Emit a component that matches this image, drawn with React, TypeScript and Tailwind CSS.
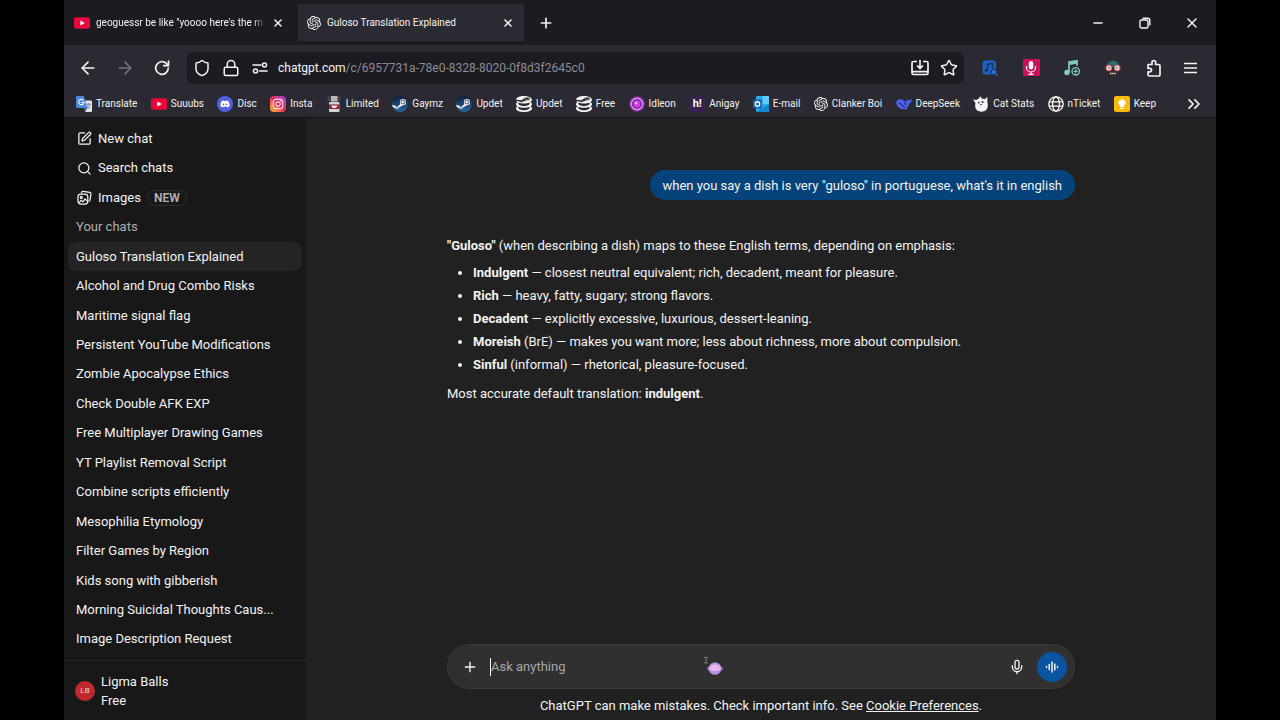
import type { ReactNode } from "react";
import { ArrowLeft, ArrowRight, ChevronsRight, Lock, Mic, Minus, Plus, Search, Shield, SquarePen, Star, X } from "lucide-react";
import { FaDiscord, FaInstagram } from "react-icons/fa";
import { SiOpenai, SiSteamdb } from "react-icons/si";

const chats = [
  "Guloso Translation Explained",
  "Alcohol and Drug Combo Risks",
  "Maritime signal flag",
  "Persistent YouTube Modifications",
  "Zombie Apocalypse Ethics",
  "Check Double AFK EXP",
  "Free Multiplayer Drawing Games",
  "YT Playlist Removal Script",
  "Combine scripts efficiently",
  "Mesophilia Etymology",
  "Filter Games by Region",
  "Kids song with gibberish",
  "Morning Suicidal Thoughts Caus...",
  "Image Description Request",
];

const terms = [
  { term: "Indulgent", note: " — closest neutral equivalent; rich, decadent, meant for pleasure." },
  { term: "Rich", note: " — heavy, fatty, sugary; strong flavors." },
  { term: "Decadent", note: " — explicitly excessive, luxurious, dessert-leaning." },
  { term: "Moreish", note: " (BrE) — makes you want more; less about richness, more about compulsion." },
  { term: "Sinful", note: " (informal) — rhetorical, pleasure-focused." },
];

function YouTubeIcon() {
  return (
    <svg viewBox="0 0 16 16" className="size-4 shrink-0">
      <rect x="0" y="2.2" width="16" height="11.6" rx="2" fill="#e8063a" />
      <path d="M6.3 5.4v5.2L10.8 8z" fill="#fff" />
    </svg>
  );
}

function TranslateIcon() {
  return (
    <svg viewBox="0 0 16 16" className="size-4 shrink-0">
      <path d="M6.5 4.5H15a1 1 0 0 1 1 1V15a1 1 0 0 1-1 1H9.5z" fill="#dfe3e8" />
      <path d="M10 8.3h4.8M12.4 7v1.3M14 8.5c-.4 1.8-1.6 3-3 3.9M11 9.8c.7 1.3 1.7 2.2 3 2.8" stroke="#6d7f93" strokeWidth=".9" fill="none" />
      <path d="M1 0h6.8l3.4 12H1a1 1 0 0 1-1-1V1a1 1 0 0 1 1-1z" fill="#4c86e0" />
      <path d="M7.3 4.2A2.7 2.7 0 1 0 8 6.2H5.4" stroke="#fff" strokeWidth="1.1" fill="none" />
      <path d="M8.6 12h2.6l-1.7 3.2z" fill="#2f5fb8" />
    </svg>
  );
}

function DiscordIcon() {
  return (
    <span className="flex size-4 shrink-0 items-center justify-center rounded-full bg-[#5260e0]">
      <FaDiscord className="size-[10px] text-white" />
    </span>
  );
}

function InstaIcon() {
  return (
    <span className="flex size-4 shrink-0 items-center justify-center rounded bg-linear-to-tr from-[#ffb300] via-[#f0245e] to-[#9a2bd8]">
      <FaInstagram className="size-3 text-white" />
    </span>
  );
}

function LimitedIcon() {
  return (
    <svg viewBox="0 0 16 16" className="size-4 shrink-0">
      <path d="M1.5 1.5h3.5M11 1.5h3.5M1.5 4h13" stroke="#55545c" strokeWidth="1.4" />
      <rect x="5" y="0" width="6.5" height="5.5" fill="#b9b5b8" />
      <rect x="3" y="6" width="10.5" height="10" rx="1" fill="#d9d2d2" />
      <rect x="3" y="8.4" width="10.5" height="4.6" fill="#8c2637" />
      <path d="M5 9.5h6.5L10 12H6.5z" fill="#f0e3e3" />
    </svg>
  );
}

function SteamIcon() {
  return (
    <svg viewBox="0 0 16 16" className="size-4 shrink-0">
      <defs>
        <linearGradient id="steam" x1="0" y1="0" x2="0" y2="1">
          <stop offset="0" stopColor="#13203c" />
          <stop offset="1" stopColor="#1f6a9c" />
        </linearGradient>
      </defs>
      <circle cx="8" cy="8" r="8" fill="url(#steam)" />
      <path d="M.2 8.800 5.200 10.600 8.300 8.200l.6-2.700 4-.3.500 3.100-3.300 1.500-2.700 1.400A2.400 2.400 0 0 1 3.200 12.300L.6 10.700z" fill="#f4f6f8" />
      <circle cx="10.900" cy="6" r="3.100" fill="#f4f6f8" />
      <circle cx="10.900" cy="6" r="1.900" fill="#f4f6f8" stroke="#1c3253" strokeWidth=".8" />
      <circle cx="5.300" cy="11.400" r="1.300" fill="none" stroke="#1c3253" strokeWidth=".6" />
    </svg>
  );
}

function IdleonIcon() {
  return (
    <svg viewBox="0 0 16 16" className="size-4 shrink-0">
      <circle cx="8" cy="8" r="7.8" fill="#7c2fa0" />
      <circle cx="8" cy="8" r="5.8" fill="none" stroke="#e68cf0" strokeWidth="1.4" />
      <circle cx="8" cy="8" r="3.4" fill="#d23ce0" />
      <circle cx="7" cy="7" r="1.3" fill="#f6b4fb" />
    </svg>
  );
}

function AnigayIcon() {
  return (
    <span className="flex size-4 shrink-0 items-center justify-center rounded-sm bg-[#35224f] text-[11px] leading-4 font-bold text-white">
      h!
    </span>
  );
}

function OutlookIcon() {
  return (
    <svg viewBox="0 0 16 16" className="size-4 shrink-0">
      <rect x="3" y="0" width="13" height="16" rx="1" fill="#2aa7e8" />
      <path d="M9.500 0H15a1 1 0 0 1 1 1v7H9.500z" fill="#5ccbf5" />
      <path d="M3 16 16 8.500V15a1 1 0 0 1-1 1z" fill="#1783d1" />
      <rect x="0" y="3.500" width="9" height="9" rx="1" fill="#0f66b8" />
      <circle cx="4.500" cy="8" r="2.200" fill="none" stroke="#fff" strokeWidth="1.400" />
    </svg>
  );
}

function DeepSeekIcon() {
  return (
    <svg viewBox="0 0 16 16" className="size-4 shrink-0">
      <path
        d="M.3 6.2C.5 4 2.4 3.200 4.600 3.300c1.500.1 2.900.9 4 2l1.700 1.300c.3-1-.1-2.200.4-3.300.5.900 1.300 1 2.300.9.900-.1 1.700-.5 2.600-1.300.3 2.500-.8 3.900-2.300 4.500-.5 2.200-1.700 3.800-2.900 4.700l1.300 1.200c-1 .5-2.200.3-3.200-.2C4.500 13.800.3 10.600.3 6.200z"
        fill="#4b63f5"
      />
      <path d="M3 7.300c2.300 0 3.400 3.300 6 4.300M8 7.200c1 0 1.800.9 1.800 2" stroke="#2b2a33" strokeWidth="1.100" fill="none" />
    </svg>
  );
}

function CatIcon() {
  return (
    <svg viewBox="0 0 16 16" className="size-4 shrink-0">
      <path d="M0 3.500 3.300 4 5.800 2.600 7.200.3l1.700 2.200 2.600.8L14.500 1l-.2 4.500c1 3.400.6 6.500-1.200 8.500-1.700 1.900-6.300 2.200-8.800.6C2.200 13.200 1.800 9.900 2.500 7z" fill="#f4f4f4" />
      <circle cx="5.800" cy="6.600" r=".9" fill="#222" />
      <circle cx="9.600" cy="6" r=".9" fill="#222" />
      <path d="m7.200 9 1.800-.7" stroke="#222" strokeWidth=".9" />
    </svg>
  );
}

function GlobeIcon() {
  return (
    <svg viewBox="0 0 16 16" className="size-4 shrink-0" fill="none" stroke="#fbfbfe" strokeWidth="1.300">
      <circle cx="8" cy="8" r="7.200" />
      <ellipse cx="8" cy="8" rx="3.400" ry="7.200" />
      <path d="M1.200 5.800h13.600M1.200 10.200h13.600" />
    </svg>
  );
}

function KeepIcon() {
  return (
    <svg viewBox="0 0 16 16" className="size-4 shrink-0">
      <rect width="16" height="16" rx="2" fill="#f9bb0b" />
      <path d="M8 3.200a3.700 3.700 0 0 0-2 6.800v1h4v-1a3.700 3.700 0 0 0-2-6.800zM6.200 11.700h3.600v1.300H6.200z" fill="#fff" />
    </svg>
  );
}

const bookmarks: { label: string; icon: ReactNode }[] = [
  { label: "Translate", icon: <TranslateIcon /> },
  { label: "Suuubs", icon: <YouTubeIcon /> },
  { label: "Disc", icon: <DiscordIcon /> },
  { label: "Insta", icon: <InstaIcon /> },
  { label: "Limited", icon: <LimitedIcon /> },
  { label: "Gaymz", icon: <SteamIcon /> },
  { label: "Updet", icon: <SteamIcon /> },
  { label: "Updet", icon: <SiSteamdb className="size-4 shrink-0" /> },
  { label: "Free", icon: <SiSteamdb className="size-4 shrink-0" /> },
  { label: "Idleon", icon: <IdleonIcon /> },
  { label: "Anigay", icon: <AnigayIcon /> },
  { label: "E-mail", icon: <OutlookIcon /> },
  { label: "Clanker Boi", icon: <SiOpenai className="size-[14px] shrink-0" /> },
  { label: "DeepSeek", icon: <DeepSeekIcon /> },
  { label: "Cat Stats", icon: <CatIcon /> },
  { label: "nTicket", icon: <GlobeIcon /> },
  { label: "Keep", icon: <KeepIcon /> },
];

function IconButton({ label, children }: { label: string; children: ReactNode }) {
  return (
    <button type="button" aria-label={label} className="flex size-5 shrink-0 items-center justify-center">
      {children}
    </button>
  );
}

function TabStrip() {
  return (
    <div className="flex h-[45px] shrink-0 items-center bg-[#1c1b22] text-[10px] leading-4">
      <div className="flex h-[37px] w-[234px] items-center gap-[6px] pr-[14px] pl-[10px]">
        <YouTubeIcon />
        <span className="flex-1 whitespace-nowrap mask-r-from-92%">geoguessr be like "yoooo here's the m</span>
        <button type="button" aria-label="Close tab">
          <X className="size-3" strokeWidth={3} />
        </button>
      </div>
      <div className="flex h-[37px] w-[226px] items-center gap-[6px] bg-[#2b2a33] pr-[10px] pl-[9px]">
        <SiOpenai className="size-[14px] shrink-0" />
        <span className="flex-1 truncate">Guloso Translation Explained</span>
        <button type="button" aria-label="Close tab">
          <X className="size-3" strokeWidth={3} />
        </button>
      </div>
      <button type="button" aria-label="New tab" className="ml-[14px]">
        <Plus className="size-4" strokeWidth={2.5} />
      </button>
      <div className="ml-auto flex gap-[27px] pr-[14px]">
        <IconButton label="Minimize">
          <Minus className="size-[14px]" strokeWidth={2.5} />
        </IconButton>
        <IconButton label="Restore">
          <svg viewBox="0 0 12 12" className="size-3" fill="none" stroke="currentColor" strokeWidth="1.400">
            <rect x="1" y="3" width="8" height="8" rx="1.500" />
            <path d="M3.500 1.200h5.300a2 2 0 0 1 2 2v5.300" />
          </svg>
        </IconButton>
        <IconButton label="Close">
          <X className="size-4" strokeWidth={2} />
        </IconButton>
      </div>
    </div>
  );
}

function NavBar() {
  return (
    <div className="flex h-[45px] shrink-0 items-center pr-[15px] pl-[14px]">
      <div className="flex gap-[17px]">
        <IconButton label="Back">
          <ArrowLeft className="size-5" />
        </IconButton>
        <IconButton label="Forward">
          <ArrowRight className="size-5 text-[#72717a]" />
        </IconButton>
        <IconButton label="Reload">
          <svg viewBox="0 0 16 16" className="size-4" fill="none" stroke="currentColor" strokeWidth="1.700" strokeLinecap="round">
            <path d="M14.300 8A6.300 6.300 0 1 1 12.300 3.400L14 5.200" />
            <path d="M14.500 1v4.700H9.800" />
          </svg>
        </IconButton>
      </div>
      <div className="ml-[15px] flex h-8 flex-1 items-center rounded-md bg-[#1c1b22] px-[5px]">
        <div className="flex gap-[9px]">
          <IconButton label="Tracking protection">
            <Shield className="size-[18px]" />
          </IconButton>
          <IconButton label="Connection secure">
            <Lock className="size-[18px]" />
          </IconButton>
          <IconButton label="Permissions">
            <svg viewBox="0 0 16 12" className="h-3 w-4" fill="none" stroke="currentColor" strokeWidth="1.500" strokeLinecap="round">
              <path d="M1 3h8M7.500 9H15" />
              <circle cx="12.500" cy="3" r="2" />
              <circle cx="3.500" cy="9" r="2" />
            </svg>
          </IconButton>
        </div>
        <label className="ml-2 flex flex-1 text-[12px] leading-5">
          <span>chatgpt.com</span>
          <input
            aria-label="Address"
            defaultValue="/c/6957731a-78e0-8328-8020-0f8d3f2645c0"
            className="min-w-0 flex-1 bg-transparent text-[#8d8c94] outline-none"
          />
        </label>
        <div className="flex gap-[9px]">
          <IconButton label="Install page">
            <svg viewBox="0 0 18 16" className="h-4 w-[18px]" fill="none" stroke="currentColor" strokeWidth="1.700">
              <path d="M6 1.500H2.500a1.500 1.500 0 0 0-1.500 1.500v10a1.500 1.500 0 0 0 1.500 1.500h13a1.500 1.500 0 0 0 1.500-1.500V3a1.500 1.500 0 0 0-1.500-1.500H12M1.500 11.700h15M9 0v8M6 5.500 9 8.500l3-3" />
            </svg>
          </IconButton>
          <IconButton label="Bookmark this page">
            <Star className="size-[18px]" />
          </IconButton>
        </div>
      </div>
      <div className="ml-4 flex gap-[21px]">
        <IconButton label="Music search">
          <svg viewBox="0 0 16 16" className="size-4">
            <rect x=".5" y=".5" width="13.500" height="14" rx="3" fill="#2062c4" />
            <path d="M5.600 10V4.300l5-1.100V8" stroke="#1b2f55" strokeWidth="1.400" fill="none" />
            <circle cx="4.400" cy="10.300" r="1.600" fill="#1b2f55" />
            <circle cx="12" cy="12" r="2.900" fill="#2a6ed0" stroke="#222c48" />
            <path d="m14 14 1.700 1.700" stroke="#2a6ed0" strokeWidth="1.500" />
          </svg>
        </IconButton>
        <IconButton label="Voice recorder">
          <span className="flex h-[17px] w-[17px] items-center justify-center bg-[#cf0f5c]">
            <svg viewBox="0 0 12 14" className="h-[14px] w-3">
              <rect x="3.800" y="0" width="4.400" height="8.500" rx="2.200" fill="#fff" />
              <path d="M1.500 5v1.500a4.500 4.500 0 0 0 9 0V5M6 11v2.500M3.500 13.300h5" stroke="#fff" strokeWidth="1.200" fill="none" />
            </svg>
          </span>
        </IconButton>
        <IconButton label="Music downloader">
          <svg viewBox="0 0 16 16" className="size-4" fill="none" stroke="#7fcdb8" strokeWidth="1.700">
            <path d="M5 12.500V2l8-1.200v5" />
            <path d="M5 3.800 13 2.600" strokeWidth="2.400" />
            <circle cx="2.900" cy="12.500" r="2.700" fill="#7fcdb8" stroke="none" />
            <circle cx="11.700" cy="11.300" r="3.700" strokeWidth="1.300" />
            <path d="M11.700 9.300v4M9.700 11.300h4" strokeWidth="1.300" />
          </svg>
        </IconButton>
        <IconButton label="Masked profile">
          <svg viewBox="0 0 16 16" className="size-4">
            <path d="M1.500 7a6.500 6.500 0 0 1 13 0z" fill="#2b6b6b" />
            <path d="M3.500 10h9l-1.500 5.500H5z" fill="#3a2a2c" />
            <circle cx="3.800" cy="8" r="2.700" fill="#fff" stroke="#e0686a" strokeWidth="1.200" />
            <circle cx="12.200" cy="8" r="2.700" fill="#fff" stroke="#e0686a" strokeWidth="1.200" />
            <circle cx="4" cy="8" r=".8" fill="#222" />
            <circle cx="12" cy="8" r=".8" fill="#222" />
            <path d="M5 13.500h6" stroke="#e8dcd2" strokeWidth="1.300" strokeDasharray="1.500 .7" />
          </svg>
        </IconButton>
        <IconButton label="Extensions">
          <svg viewBox="0 0 16 18" className="h-[18px] w-4" fill="none" stroke="currentColor" strokeWidth="1.700" strokeLinejoin="round">
            <path d="M2 5.500h4V3.300a1.800 1.800 0 0 1 3.600 0v2.200h2.900a1.500 1.500 0 0 1 1.500 1.500v8.500a1.500 1.500 0 0 1-1.500 1.500H3.500A1.500 1.500 0 0 1 2 15.500v-2.700h1.800a1.700 1.700 0 0 0 0-3.400H2z" />
          </svg>
        </IconButton>
        <button type="button" aria-label="Open menu" className="-ml-1 flex size-5 items-center justify-center">
          <svg viewBox="0 0 14 12" className="h-3 w-[14px]" stroke="currentColor" strokeWidth="1.500">
            <path d="M0 1.500h13M0 6h13M0 10.500h13" />
          </svg>
        </button>
      </div>
    </div>
  );
}

function BookmarksBar() {
  return (
    <nav aria-label="Bookmarks" className="flex h-[27px] shrink-0 items-center px-3 text-[10px] leading-4">
      <ul className="flex flex-1 justify-between">
        {bookmarks.map((b, i) => (
          <li key={i}>
            <a href="#" className="flex items-center gap-1 whitespace-nowrap">
              {b.icon}
              {b.label}
            </a>
          </li>
        ))}
      </ul>
      <button type="button" aria-label="More bookmarks" className="ml-7">
        <ChevronsRight className="size-5" />
      </button>
    </nav>
  );
}

function Sidebar() {
  return (
    <aside className="flex w-[242px] shrink-0 flex-col bg-[#181818]">
      <nav className="flex min-h-0 flex-1 flex-col px-1 py-[6px] *:flex-1">
        <a href="#" className="flex items-center gap-[6px] px-[9px]">
          <SquarePen className="size-[15px]" /> New chat
        </a>
        <a href="#" className="flex items-center gap-[6px] px-[9px]">
          <Search className="size-[15px]" /> Search chats
        </a>
        <a href="#" className="flex items-center gap-[6px] px-[9px]">
          <svg viewBox="0 0 16 16" className="size-[15px]" fill="none" stroke="currentColor" strokeWidth="1.300" strokeLinejoin="round">
            <path d="M4.500 3.500 5 2.400a1.500 1.500 0 0 1 1.700-1l6.800 1.100a1.700 1.700 0 0 1 1.400 2l-1.100 6.300a1.500 1.500 0 0 1-1.500 1.200" />
            <rect x="1" y="4.500" width="10.500" height="10.500" rx="3" />
            <circle cx="4.600" cy="8" r="1.100" />
            <path d="m2 13.500 2.500-2.300 2 1.300 2-3 2.700 2.700" />
          </svg>
          Images
          <span className="rounded-full border border-[#2e2e2e] px-[6px] text-[12px] leading-[14px] font-semibold text-[#b4b4b4]">NEW</span>
        </a>
        <h2 className="flex items-center px-2 text-[#afafaf]">Your chats</h2>
        {chats.map((chat, i) => (
          <a key={chat} href="#" className={`flex items-center rounded-lg px-2 whitespace-nowrap ${i === 0 ? "bg-[#242424]" : ""}`}>
            {chat}
          </a>
        ))}
      </nav>
      <button type="button" className="flex h-[60px] items-center gap-[6px] border-t border-[#262626] px-[11px] text-left">
        <span className="flex size-5 items-center justify-center rounded-full bg-[#c02a2e] text-[8px] text-[#f3cfcf]">LB</span>
        <span className="leading-[19px]">
          Ligma Balls
          <br />
          Free
        </span>
      </button>
    </aside>
  );
}

function Composer() {
  return (
    <form className="relative flex h-[45px] items-center rounded-full border border-[#3a3a3a] bg-[#303030] pr-[7px] pl-[14px]">
      <button type="button" aria-label="Add files">
        <Plus className="size-4" />
      </button>
      <span className="ml-3 h-[18px] w-px bg-white" />
      <input
        aria-label="Ask anything"
        placeholder="Ask anything"
        className="min-w-0 flex-1 bg-transparent outline-none placeholder:text-[#a6a6a6]"
      />
      <button type="button" aria-label="Dictate">
        <Mic className="size-4" />
      </button>
      <button type="button" aria-label="Use voice" className="ml-3 flex size-[30px] items-center justify-center rounded-full bg-[#0a54a0]">
        <svg viewBox="0 0 14 14" className="size-[14px]" stroke="#fff" strokeWidth="1.400" strokeLinecap="round">
          <path d="M1.500 6.500v1M4.200 4.500v5M7 2v10M9.800 4v6M12.500 6.500v1" />
        </svg>
      </button>
      {/* mouse pointer with its planet trail */}
      <svg viewBox="0 0 20 22" className="pointer-events-none absolute top-[10px] left-[256px] h-[22px] w-5">
        <path d="M0 2.500h4M2 2.500v5.500M0 8h4" stroke="#777" fill="none" />
        <path d="M2.500 13.500 6 10.500h10l3.500 3-3.500 3.500H6z" fill="#8d6cc4" />
        <circle cx="11" cy="13.500" r="6.300" fill="#b191dc" />
        <path d="M5 14a6.200 6.200 0 0 1 12 0c-2 3-10 3-12 0z" fill="#eab2ea" />
      </svg>
    </form>
  );
}

export default function App() {
  return (
    <div className="h-screen bg-black px-16 font-['Roboto','Open_Sans',sans-serif] text-[13px] text-[#f3f3f3]">
      <div className="flex h-full flex-col bg-[#2b2a33]">
        <TabStrip />
        <NavBar />
        <BookmarksBar />
        <div className="flex min-h-0 flex-1 border-t border-[#131316]">
          <Sidebar />
          <main className="flex min-w-0 flex-1 flex-col bg-[#212121]">
            <div className="mx-auto flex w-full max-w-[628px] flex-1 flex-col">
              <p className="mt-[52px] self-end rounded-full bg-[#06437a] px-[13px] pt-[6px] pb-1 leading-5">
                when you say a dish is very "guloso" in portuguese, what's it in english
              </p>
              <div className="mt-[34px] leading-[23px]">
                <p>
                  <strong>"Guloso"</strong> (when describing a dish) maps to these English terms, depending on emphasis:
                </p>
                <ul className="mt-1 list-disc pl-[26px]">
                  {terms.map((t) => (
                    <li key={t.term}>
                      <strong>{t.term}</strong>
                      {t.note}
                    </li>
                  ))}
                </ul>
                <p className="mt-[6px]">
                  Most accurate default translation: <strong>indulgent</strong>.
                </p>
              </div>
              <div className="mt-auto">
                <Composer />
                <p className="pt-[7px] pb-1 text-center leading-5">
                  ChatGPT can make mistakes. Check important info. See{" "}
                  <a href="#" className="underline">
                    Cookie Preferences
                  </a>
                  .
                </p>
              </div>
            </div>
          </main>
        </div>
      </div>
    </div>
  );
}
